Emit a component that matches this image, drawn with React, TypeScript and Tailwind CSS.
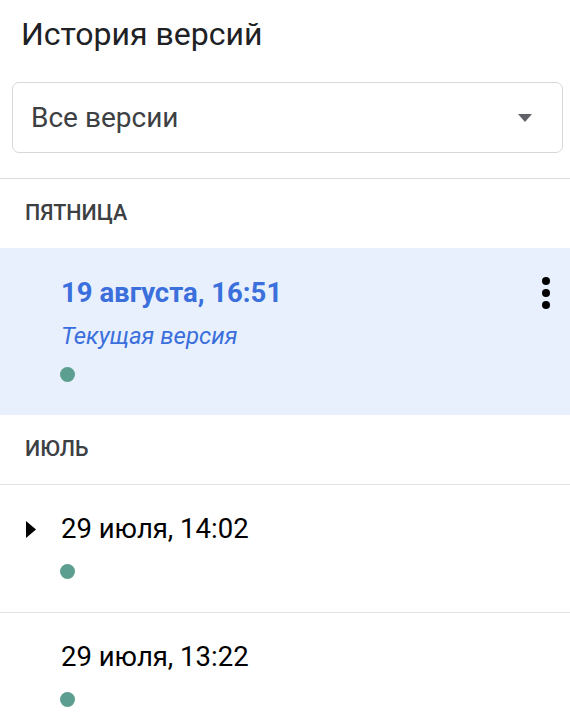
function Dot() {
  return <span className="block w-[15px] h-[15px] rounded-full bg-[#5c9f90]" />
}

function Kebab() {
  return (
    <svg width="24" height="40" viewBox="0 0 24 40" className="shrink-0">
      <circle cx="12" cy="8" r="4" fill="#000" />
      <circle cx="12" cy="20" r="4" fill="#000" />
      <circle cx="12" cy="32" r="4" fill="#000" />
    </svg>
  )
}

function Caret() {
  return (
    <svg width="10" height="17" viewBox="0 0 10 17">
      <path d="M0 0 L10 8.5 L0 17 Z" fill="#000" />
    </svg>
  )
}

function SectionHeader({ label }: { label: string }) {
  return (
    <div className="h-[69px] flex items-center px-[25px] text-[21.5px] font-medium text-[#3c4043]">
      {label}
    </div>
  )
}

function VersionItem({ date, caret }: { date: string; caret?: boolean }) {
  return (
    <div className="border-t border-[#e3e3e3] pt-[22px] pb-[33px]">
      <div className="flex items-center h-[44px]">
        <div className="w-[61px] pl-[26px] flex items-center">{caret && <Caret />}</div>
        <span className="text-[27.5px] text-black">{date}</span>
      </div>
      <div className="pl-[60px] mt-[13px]">
        <Dot />
      </div>
    </div>
  )
}

export default function App() {
  return (
    <div className="w-full bg-white font-['Roboto',sans-serif] overflow-hidden h-[720px]">
      <div className="border-b border-[#dadce0] pb-[25px]">
        <h1 className="pt-[14px] px-[21px] text-[32px] leading-[40px] text-[#202124]">
          История версий
        </h1>
        <div className="mt-[28px] ml-[12px] mr-[7px] h-[71px] rounded-[7px] border border-[#d6d8db] flex items-center justify-between pl-[18px] pr-[30px]">
          <span className="text-[28px] text-[#3c4043]">Все версии</span>
          <svg width="14" height="8" viewBox="0 0 14 8">
            <path d="M0 0 L14 0 L7 8 Z" fill="#5f6368" />
          </svg>
        </div>
      </div>

      <SectionHeader label="ПЯТНИЦА" />

      <div className="bg-[#e8f0fe] pt-[23px] pb-[33px]">
        <div className="flex items-center justify-between h-[44px] pl-[61px] pr-[12px]">
          <span className="text-[27.5px] font-bold text-[#3a6fdc]">19 августа, 16:51</span>
          <Kebab />
        </div>
        <div className="h-[42px] flex items-center pl-[61px] text-[24px] italic text-[#3a6fdc]">
          Текущая версия
        </div>
        <div className="pl-[60px] mt-[10px]">
          <Dot />
        </div>
      </div>

      <SectionHeader label="ИЮЛЬ" />
      <VersionItem date="29 июля, 14:02" caret />
      <VersionItem date="29 июля, 13:22" />
    </div>
  )
}
